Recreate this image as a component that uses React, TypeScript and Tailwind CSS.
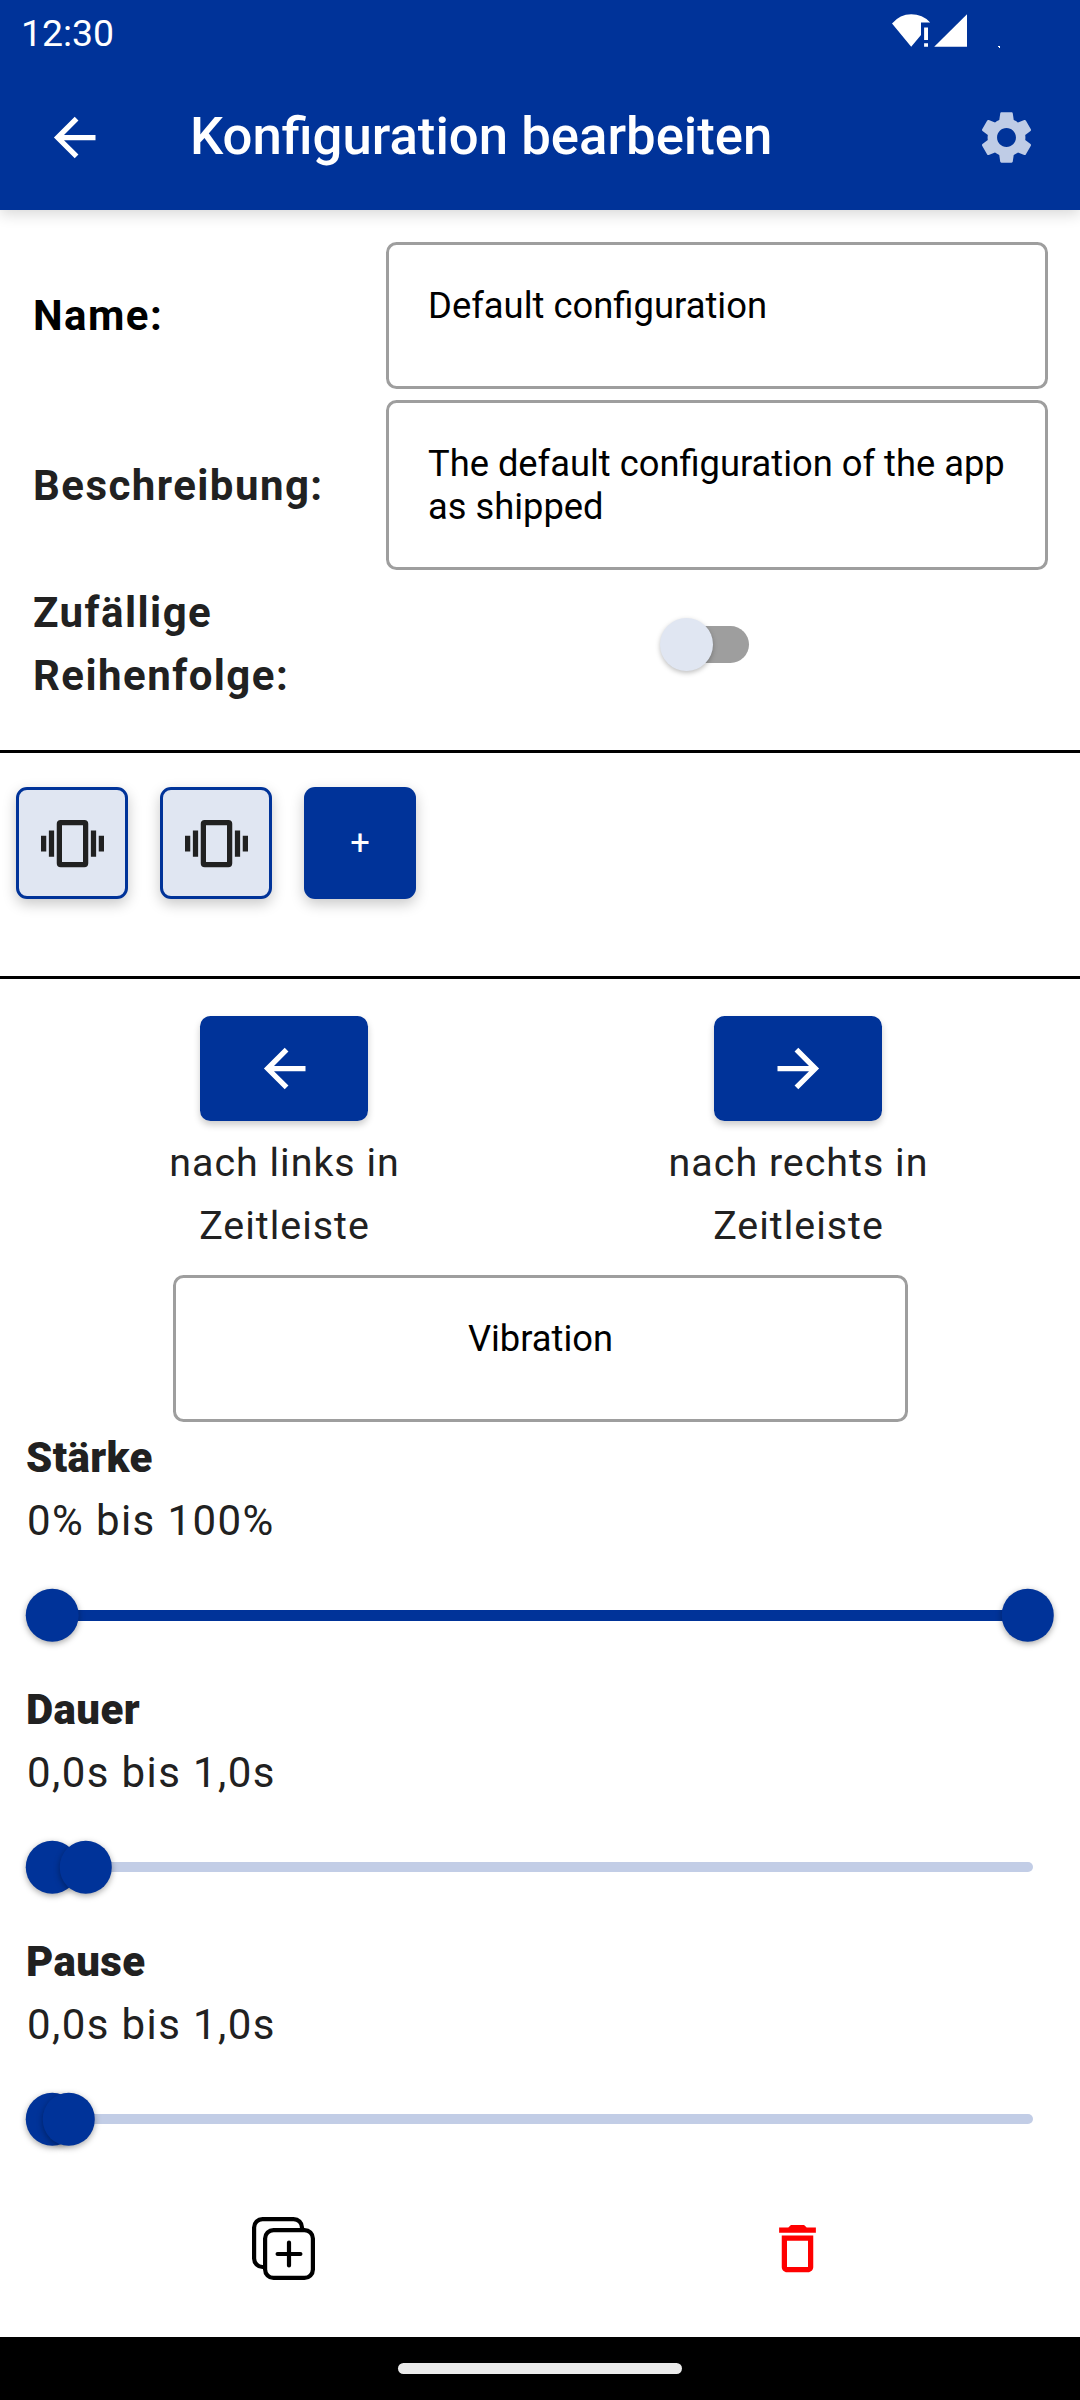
import React from "react";
import type { ReactNode } from "react";

const arrowLeft = "M20,11V13H8L13.5,18.5L12.08,19.92L4.16,12L12.08,4.08L13.5,5.5L8,11H20Z";
const arrowRight = "M4,11V13H16L10.5,18.5L11.92,19.92L19.84,12L11.92,4.08L10.5,5.5L16,11H4Z";
const gear =
  "M19.14,12.94c0.04-0.3,0.06-0.61,0.06-0.94c0-0.32-0.02-0.64-0.07-0.94l2.03-1.58c0.18-0.14,0.23-0.41,0.12-0.61l-1.92-3.32c-0.12-0.22-0.37-0.29-0.59-0.22l-2.39,0.96c-0.5-0.38-1.03-0.7-1.62-0.94L14.4,2.81c-0.04-0.24-0.24-0.41-0.48-0.41h-3.84c-0.24,0-0.43,0.17-0.47,0.41L9.25,5.35C8.66,5.59,8.12,5.92,7.63,6.29L5.24,5.33c-0.22-0.08-0.47,0-0.59,0.22L2.74,8.87C2.62,9.08,2.66,9.34,2.86,9.48l2.03,1.58C4.84,11.36,4.8,11.69,4.8,12s0.02,0.64,0.07,0.94l-2.03,1.58c-0.18,0.14-0.23,0.41-0.12,0.61l1.92,3.32c0.12,0.22,0.37,0.29,0.59,0.22l2.39-0.96c0.5,0.38,1.03,0.7,1.62,0.94l0.36,2.54c0.05,0.24,0.24,0.41,0.48,0.41h3.84c0.24,0,0.44-0.17,0.47-0.41l0.36-2.54c0.59-0.24,1.13-0.56,1.62-0.94l2.39,0.96c0.22,0.08,0.47,0,0.59-0.22l1.92-3.32c0.12-0.22,0.07-0.47-0.12-0.61L19.14,12.94z M12,15.6c-1.98,0-3.6-1.62-3.6-3.6s1.62-3.6,3.6-3.6s3.6,1.62,3.6,3.6S13.98,15.6,12,15.6z";
const vibrate =
  "M16,19H8V5H16M16.5,3H7.5A1.5,1.5 0 0,0 6,4.5V19.5A1.5,1.5 0 0,0 7.5,21H16.5A1.5,1.5 0 0,0 18,19.5V4.5A1.5,1.5 0 0,0 16.5,3M19,17H21V7H19M22,15H24V9H22M3,17H5V7H3M0,15H2V9H0V15Z";
const trash =
  "M6 19c0 1.1.9 2 2 2h8c1.1 0 2-.9 2-2V7H6v12zM8 9h8v10H8V9zm7.5-5l-1-1h-5l-1 1H5v2h14V4h-3.5z";

function Icon({ d, className = "" }: { d: string; className?: string }) {
  return (
    <svg viewBox="0 0 24 24" className={`size-[63px] shrink-0 ${className}`} fill="currentColor" fillRule="evenodd">
      <path d={d} />
    </svg>
  );
}

function StatusBar() {
  return (
    <div className="flex h-[64px] justify-between pl-[21px]">
      <span className="pt-[11px] text-[37.4px] leading-[44px]">12:30</span>
      <div className="flex pt-[14px] pr-[80px]">
        <svg className="h-[34px] w-[108px]" viewBox="892 14 108 34" fill="#fff">
          <path d="M892,23.5 Q900,14.3 911.2,14.3 Q922.5,14.3 930.2,22.4 H921 V35 L911.2,46.7 Z" />
          <path d="M924.1,27.5H928V40H924.1Z M924.1,43.3H928V46.7H924.1Z" />
          <path d="M934.2,46.8 L967,14.3 V46.8 Z" />
          <path d="M998,46h2v2h-1v-1h-1z" />
        </svg>
      </div>
    </div>
  );
}

function Header() {
  return (
    <header className="relative h-[210px] bg-[#003399] text-white shadow-[0_4px_14px_rgba(0,0,0,0.16)]">
      <StatusBar />
      <div className="flex h-[146px] items-center pr-[42px] pl-[43px]">
        <Icon d={arrowLeft} />
        <h1 className="ml-[84px] flex-1 pb-[3px] text-[52.7px] leading-[62px] font-medium">Konfiguration bearbeiten</h1>
        <Icon d={gear} className="text-[#bfcce6]" />
      </div>
    </header>
  );
}

function Field({ children, className = "" }: { children: ReactNode; className?: string }) {
  return (
    <div className={`rounded-[10.5px] border-3 border-[#9e9e9e] pt-[39px] leading-[43px] text-black ${className}`}>
      {children}
    </div>
  );
}

function Label({ children, className = "text-[#212121]" }: { children: ReactNode; className?: string }) {
  return (
    <div className={`w-[353px] shrink-0 text-[42px] leading-[63px] font-bold tracking-[1.45px] ${className}`}>
      {children}
    </div>
  );
}

function Tile({ children, className }: { children: ReactNode; className: string }) {
  return (
    <button
      className={`flex size-[112px] items-center justify-center rounded-[11px] shadow-[0_5px_14px_rgba(0,0,0,0.22)] ${className}`}
    >
      {children}
    </button>
  );
}

function Mover({ icon, direction }: { icon: string; direction: string }) {
  return (
    <div className="flex w-[514px] flex-col items-center">
      <button className="flex h-[105px] w-[168px] items-center justify-center rounded-[10.5px] bg-[#003399] text-white shadow-[0_4px_7px_rgba(0,0,0,0.2)]">
        <Icon d={icon} />
      </button>
      <p className="mt-[10px] pl-px text-center text-[39.4px] leading-[63px] tracking-[1px] text-[#212121]">
        nach {direction} in
        <br />
        Zeitleiste
      </p>
    </div>
  );
}

function Thumb({ at }: { at: number }) {
  return (
    <span
      className="absolute top-1/2 size-[52.5px] -translate-x-1/2 -translate-y-1/2 rounded-full bg-[#003399] shadow-[0_2px_6px_rgba(0,0,0,0.35)]"
      style={{ left: at }}
    />
  );
}

function RangeSlider({ title, range, end }: { title: string; range: string; end: number }) {
  return (
    <section className="h-[252px] px-[26px] text-[42px] leading-[63px] text-[#212121]">
      <h2 className="font-black tracking-[0.4px]">{title}</h2>
      <p className="pl-px tracking-[1.4px]">{range}</p>
      <div className="relative flex h-[126px] items-center pr-[21px] pl-[21px]">
        <div className="h-[10.5px] w-full rounded-full bg-[#c2cde6]" />
        <div className="absolute left-[26px] h-[11px] bg-[#003399]" style={{ width: end - 26 }} />
        <Thumb at={26.3} />
        <Thumb at={end} />
      </div>
    </section>
  );
}

function DuplicateIcon() {
  return (
    <svg className="size-[63px]" viewBox="0 0 63 63" fill="none" stroke="#000" strokeWidth="4.2" strokeLinecap="round">
      <path d="M11.5,50 H10.5 A8.4,8.4 0 0 1 2.1,41.6 V10.5 A8.4,8.4 0 0 1 10.5,2.1 H41.6 A8.4,8.4 0 0 1 50,10.5 V11.5" strokeLinecap="butt" />
      <rect x="13.1" y="13.1" width="47.8" height="47.8" rx="8.4" />
      <path d="M37,25.6V48.4M25.6,37H48.4" />
    </svg>
  );
}

export default function App() {
  return (
    <div className="flex h-[2400px] w-[1080px] flex-col overflow-hidden bg-white font-['Roboto',sans-serif]">
      <Header />

      <div className="flex h-[540px] flex-col gap-[11px] pt-[32px] pr-[32px] pl-[33px]">
        <div className="flex items-center">
          <Label className="text-black">Name:</Label>
          <Field className="h-[147px] flex-1 pl-[39px] text-[36.4px]">Default configuration</Field>
        </div>
        <div className="flex items-center">
          <Label>Beschreibung:</Label>
          <Field className="h-[170px] flex-1 pl-[39px] text-[36.3px]">
            The default configuration of the app
            <br />
            as shipped
          </Field>
        </div>
        <div className="flex items-center">
          <Label>
            Zufällige
            <br />
            Reihenfolge:
          </Label>
          <div className="ml-[274px] flex h-[54px] w-[89px] items-center rounded-full">
            <span className="relative z-10 size-[53px] shrink-0 rounded-full bg-[#e0e6f2] shadow-[0_2px_5px_rgba(0,0,0,0.25)]" />
            <span className="-ml-[36px] h-[37px] w-[72px] rounded-full bg-[#9e9e9e]" />
          </div>
        </div>
      </div>

      <div className="flex h-[229px] gap-8 border-y-3 border-black pt-[34px] pl-4">
        <Tile className="border-3 border-[#003399] bg-[#e0e6f2] text-[#212121]">
          <Icon d={vibrate} />
        </Tile>
        <Tile className="border-3 border-[#003399] bg-[#e0e6f2] text-[#212121]">
          <Icon d={vibrate} />
        </Tile>
        <Tile className="bg-[#003399] text-[34.5px] text-white">+</Tile>
      </div>

      <div className="flex h-[296px] pt-[37px] pl-[27px]">
        <Mover icon={arrowLeft} direction="links" />
        <Mover icon={arrowRight} direction="rechts" />
      </div>

      <Field className="mx-auto h-[147px] w-[735px] shrink-0 pl-px text-center text-[36.3px]">Vibration</Field>

      <div className="mt-[4px]">
        <RangeSlider title="Stärke" range="0% bis 100%" end={1001.8} />
        <RangeSlider title="Dauer" range="0,0s bis 1,0s" end={59.5} />
        <RangeSlider title="Pause" range="0,0s bis 1,0s" end={42.5} />
      </div>

      <div className="flex flex-1 pt-[35px] pl-[26.5px]">
        <div className="flex w-[514px] items-start justify-center">
          <DuplicateIcon />
        </div>
        <div className="flex w-[514px] items-start justify-center">
          <Icon d={trash} className="text-[#ff0000]" />
        </div>
      </div>

      <nav className="flex h-[63px] items-center justify-center bg-black">
        <div className="h-[11px] w-[284px] rounded-full bg-[#ebebeb]" />
      </nav>
    </div>
  );
}
